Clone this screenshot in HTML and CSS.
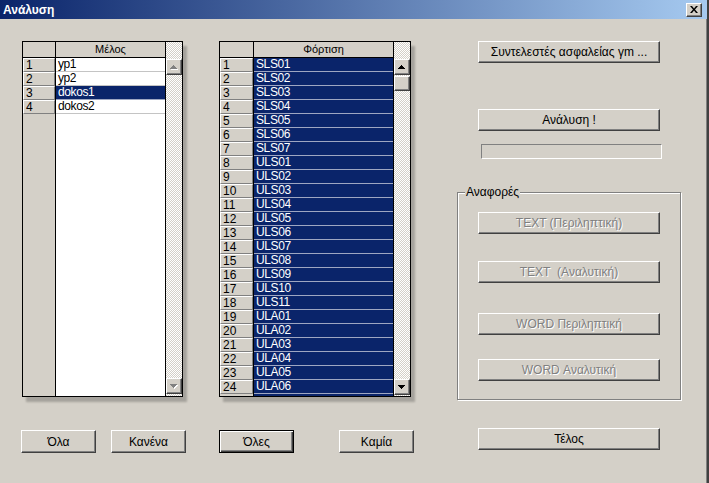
FILE: index.html
```html
<!DOCTYPE html>
<html lang="el">
<head>
<meta charset="utf-8">
<title>Ανάλυση</title>
<link rel="stylesheet" href="styles.css">
</head>
<body>
<div class="window">
  <div class="titlebar">
    <span class="title">Ανάλυση</span>
    <button class="close" aria-label="Κλείσιμο"><svg width="8" height="7" viewBox="0 0 8 7"><path d="M0 0h2l2 2.5L6 0h2L5 3.5 8 7H6L4 4.5 2 7H0l3-3.5z" fill="#000"/></svg></button>
  </div>
  <div class="content">
    <div class="col col-members">
      <div class="grid grid-members">
        <div class="grid-main">
          <div class="grid-head">
            <div class="head-num"></div>
            <div class="head-cell">Μέλος</div>
          </div>
          <div class="grid-body">
            <div class="num-col">
              <div class="num">1</div>
              <div class="num">2</div>
              <div class="num">3</div>
              <div class="num">4</div>
            </div>
            <div class="data-col">
              <div class="cell">yp1</div>
              <div class="cell">yp2</div>
              <div class="cell selected">dokos1</div>
              <div class="cell">dokos2</div>
            </div>
          </div>
        </div>
        <div class="vscroll">
          <div class="sbtn sbtn-up disabled"><svg width="8" height="5" viewBox="0 0 8 5"><path class="hl" d="M4 1h1v1h1v1h1v1h1v1H1V4h1V3h1V2h1z"/><path class="ar" d="M3 0h1v1h1v1h1v1h1v1H0V3h1V2h1V1h1z"/></svg></div>
          <div class="sbtn sbtn-down disabled"><svg width="8" height="5" viewBox="0 0 8 5"><path class="hl" d="M1 1h7v1H7v1H6v1H5v1H4V4H3V3H2V2H1z"/><path class="ar" d="M0 0h7v1H6v1H5v1H4v1H3V3H2V2H1V1H0z"/></svg></div>
        </div>
      </div>
      <div class="btn-row">
        <button class="btn btn-small">Όλα</button>
        <button class="btn btn-small">Κανένα</button>
      </div>
    </div>

    <div class="col col-loads">
      <div class="grid grid-loads">
        <div class="grid-main">
          <div class="grid-head">
            <div class="head-num"></div>
            <div class="head-cell">Φόρτιση</div>
          </div>
          <div class="grid-body">
            <div class="num-col">
              <div class="num">1</div><div class="num">2</div><div class="num">3</div><div class="num">4</div><div class="num">5</div>
              <div class="num">6</div><div class="num">7</div><div class="num">8</div><div class="num">9</div><div class="num">10</div>
              <div class="num">11</div><div class="num">12</div><div class="num">13</div><div class="num">14</div><div class="num">15</div>
              <div class="num">16</div><div class="num">17</div><div class="num">18</div><div class="num">19</div><div class="num">20</div>
              <div class="num">21</div><div class="num">22</div><div class="num">23</div><div class="num">24</div>
            </div>
            <div class="data-col">
              <div class="cell selected">SLS01</div>
              <div class="cell selected">SLS02</div>
              <div class="cell selected">SLS03</div>
              <div class="cell selected">SLS04</div>
              <div class="cell selected">SLS05</div>
              <div class="cell selected">SLS06</div>
              <div class="cell selected">SLS07</div>
              <div class="cell selected">ULS01</div>
              <div class="cell selected">ULS02</div>
              <div class="cell selected">ULS03</div>
              <div class="cell selected">ULS04</div>
              <div class="cell selected">ULS05</div>
              <div class="cell selected">ULS06</div>
              <div class="cell selected">ULS07</div>
              <div class="cell selected">ULS08</div>
              <div class="cell selected">ULS09</div>
              <div class="cell selected">ULS10</div>
              <div class="cell selected">ULS11</div>
              <div class="cell selected">ULA01</div>
              <div class="cell selected">ULA02</div>
              <div class="cell selected">ULA03</div>
              <div class="cell selected">ULA04</div>
              <div class="cell selected">ULA05</div>
              <div class="cell selected">ULA06</div>
            </div>
          </div>
        </div>
        <div class="vscroll">
          <div class="sbtn sbtn-up"><svg width="8" height="5" viewBox="0 0 8 5"><path class="ar" d="M3 0h1v1h1v1h1v1h1v1H0V3h1V2h1V1h1z"/></svg></div>
          <div class="sthumb"></div>
          <div class="sbtn sbtn-down"><svg width="8" height="5" viewBox="0 0 8 5"><path class="ar" d="M0 0h7v1H6v1H5v1H4v1H3V3H2V2H1V1H0z"/></svg></div>
        </div>
      </div>
      <div class="btn-row">
        <button class="btn btn-small btn-default">Όλες</button>
        <button class="btn btn-small">Καμία</button>
      </div>
    </div>

    <div class="col col-actions">
      <button class="btn btn-wide">Συντελεστές ασφαλείας γm ...</button>
      <button class="btn btn-wide btn-analyze">Ανάλυση !</button>
      <div class="progress"></div>
      <fieldset class="reports">
        <legend>Αναφορές</legend>
        <button class="btn btn-wide btn-disabled r1" disabled>TEXT (Περιληπτική)</button>
        <button class="btn btn-wide btn-disabled r2" disabled>TEXT&nbsp; (Αναλυτική)</button>
        <button class="btn btn-wide btn-disabled r3" disabled>WORD Περιληπτική</button>
        <button class="btn btn-wide btn-disabled r4" disabled>WORD Αναλυτική</button>
      </fieldset>
      <button class="btn btn-wide btn-end">Τέλος</button>
    </div>
  </div>
</div>
</body>
</html>
```

FILE: styles.css
```css
* { box-sizing: border-box; }

html, body {
  margin: 0;
  padding: 0;
  background: #d4d0c8;
}

body {
  font-family: "Liberation Sans", Arial, sans-serif;
  color: #000;
}

.window {
  width: 709px;
  height: 483px;
  display: flex;
  flex-direction: column;
  background: #d4d0c8;
  border-right: 2px solid #404040;
  box-shadow: inset -1px 0 0 #808080;
  overflow: hidden;
}

.titlebar {
  height: 19px;
  flex: none;
  display: flex;
  align-items: center;
  justify-content: space-between;
  padding: 0 5px 0 3px;
  background: linear-gradient(to right, #0a246a 0%, #a6caf0 100%);
}

.title {
  color: #fff;
  font-weight: bold;
  font-size: 12px;
  line-height: 14px;
}

.close {
  width: 16px;
  height: 14px;
  padding: 0;
  margin: 0;
  display: flex;
  align-items: center;
  justify-content: center;
  background: #d4d0c8;
  border: 1px solid;
  border-color: #fff #404040 #404040 #fff;
  box-shadow: inset -1px -1px 0 #808080;
}

.content {
  flex: 1;
  display: flex;
  align-items: flex-start;
  padding: 22px 0 0 21px;
}

.col {
  display: flex;
  flex-direction: column;
}

.col-members { width: 165px; }
.col-loads { width: 195px; margin-left: 33px; }
.col-actions { width: 224px; margin-left: 43px; }

/* ---------- grids ---------- */
.grid {
  height: 356px;
  display: flex;
  border: 1px solid #000;
  background: #fff;
  box-shadow: 4px 5px 2px rgba(0, 0, 0, 0.22);
}

.grid-members { width: 161px; margin-left: 1px; }
.grid-loads { width: 192px; }

.grid-main {
  flex: 1;
  display: flex;
  flex-direction: column;
  border-right: 1px solid #000;
  overflow: hidden;
}

.grid-head {
  height: 16px;
  flex: none;
  display: flex;
  background: #d4d0c8;
  border-bottom: 1px solid #000;
}

.head-num {
  border-right: 1px solid #000;
}

.grid-members .head-num,
.grid-members .num-col { width: 33px; }
.grid-loads .head-num,
.grid-loads .num-col { width: 34px; }

.head-cell {
  flex: 1;
  text-align: center;
  font-size: 11px;
  line-height: 15px;
}

.grid-body {
  flex: 1;
  display: flex;
  overflow: hidden;
}

.num-col {
  flex: none;
  background: #d4d0c8;
  border-right: 1px solid #000;
}

.num {
  height: 14px;
  border: 1px solid;
  border-color: #fff #808080 #808080 #fff;
  padding-left: 2px;
  font-size: 12px;
  line-height: 12px;
}

.data-col {
  flex: 1;
  background: #fff;
}

.grid-loads .data-col { background: #0a246a; }

.cell {
  height: 14px;
  padding-left: 2px;
  font-size: 12px;
  line-height: 13px;
  letter-spacing: -0.4px;
  border-bottom: 1px solid #c4c4c4;
  white-space: nowrap;
}

.cell.selected {
  background: #0a246a;
  color: #fff;
  border-bottom-color: #9ea6c2;
}

.vscroll {
  width: 16px;
  flex: none;
  display: flex;
  flex-direction: column;
  background-color: #fff;
  background-image: repeating-conic-gradient(#d4d0c8 0% 25%, #fff 0% 50%);
  background-size: 2px 2px;
}

.sbtn, .sthumb {
  width: 16px;
  height: 16px;
  flex: none;
  background: #d4d0c8;
  border: 1px solid;
  border-color: #fff #404040 #404040 #fff;
  box-shadow: inset -1px -1px 0 #808080;
  display: flex;
  align-items: center;
  justify-content: center;
}

.sbtn-up { margin-top: 17px; }
.sthumb { height: 15px; margin-top: 1px; }
.sbtn-down { margin-top: auto; margin-bottom: 1px; }
.grid-members .sbtn-down { margin-bottom: 2px; }

.sbtn .ar { fill: #000; }
.sbtn.disabled .ar { fill: #808080; }
.sbtn .hl { fill: #fff; }

/* ---------- buttons ---------- */
.btn {
  font-family: "Liberation Sans", Arial, sans-serif;
  font-size: 12px;
  color: #000;
  background: #d4d0c8;
  border: 1px solid;
  border-color: #fff #404040 #404040 #fff;
  box-shadow: inset -1px -1px 0 #808080;
  padding: 0;
  margin: 0;
  text-align: center;
  white-space: nowrap;
}

.btn-row {
  display: flex;
  justify-content: space-between;
  margin-top: 33px;
}

.btn-small {
  width: 75px;
  height: 23px;
}

.btn-default {
  border-color: #000;
  box-shadow: inset 1px 1px 0 #fff, inset -1px -1px 0 #404040, inset -2px -2px 0 #808080;
}

.btn-wide {
  width: 182px;
  height: 22px;
  margin-left: 21px;
}

.btn-analyze { margin-top: 46px; }

.btn-disabled {
  color: #808080;
  text-shadow: 1px 1px 0 #fff;
}

.progress {
  width: 181px;
  height: 15px;
  margin: 13px 0 0 24px;
  border: 1px solid;
  border-color: #808080 #fff #fff #808080;
}

.reports {
  width: 224px;
  margin: 27px 0 0 0;
  padding: 0 0 18px 0;
  border: 1px solid #808080;
  box-shadow: 1px 1px 0 #fff, inset 1px 1px 0 #fff;
  display: flex;
  flex-direction: column;
}

.reports legend {
  margin-left: 7px;
  padding: 0 1px;
  font-size: 12px;
  line-height: 13px;
  background: #d4d0c8;
}

.reports .btn-wide { margin-left: 20px; }
.reports .r1 { margin-top: 13px; }
.reports .r2 { margin-top: 27px; }
.reports .r3 { margin-top: 30px; }
.reports .r4 { margin-top: 24px; }

.btn-end { margin-top: 28px; }
```
